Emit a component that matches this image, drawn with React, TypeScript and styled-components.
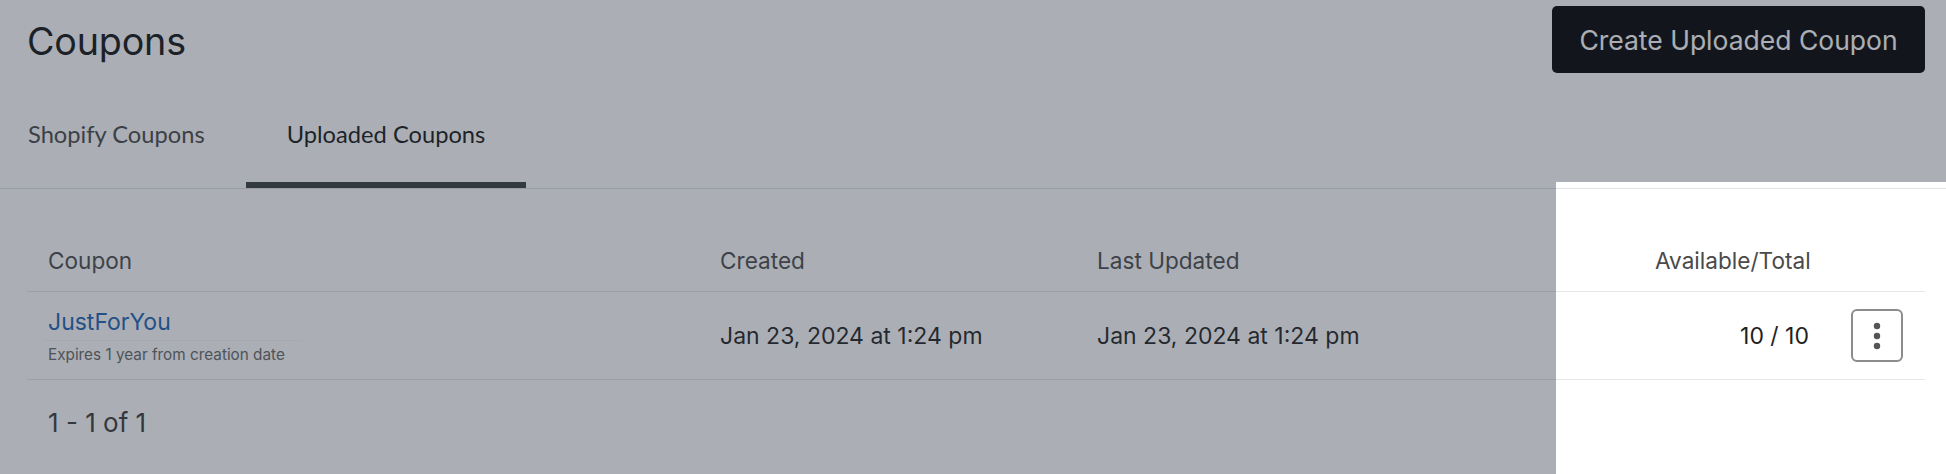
import React from "react";
import styled, { createGlobalStyle } from "styled-components";

const GlobalStyle = createGlobalStyle`
  html, body {
    margin: 0;
    padding: 0;
    background: #ffffff;
    overflow: hidden;
  }
  body {
    font-family: Inter, "Liberation Sans", Arial, sans-serif;
    color: #222;
  }
`;

const Page = styled.div`
  position: relative;
  width: 1946px;
  height: 474px;
  overflow: hidden;
  background: #ffffff;
`;

const Header = styled.div`
  display: flex;
  align-items: center;
  justify-content: space-between;
  padding: 6px 21px 0 27px;
`;

const Title = styled.h1`
  margin: 0;
  padding-top: 2px;
  font-size: 37.7px;
  font-weight: 400;
  color: #111315;
  letter-spacing: -0.2px;
`;

const PrimaryButton = styled.button`
  height: 67px;
  width: 373px;
  border: none;
  border-radius: 5px;
  background: #000000;
  color: #ffffff;
  font-family: Inter, "Liberation Sans", Arial, sans-serif;
  font-size: 26.5px;
  font-weight: 400;
  cursor: pointer;
`;

const TabBar = styled.div`
  display: flex;
  padding-left: 28px;
  border-bottom: 1px solid #dfe3e8;
`;

const Tab = styled.div<{ $active?: boolean; $first?: boolean }>`
  padding: 46px 41px 33px ${(p) => (p.$first ? "0" : "41px")};
  line-height: 30px;
  font-family: Lato, Inter, sans-serif;
  font-size: 23.7px;
  color: ${(p) => (p.$active ? "#141414" : "#474747")};
  border-bottom: 6px solid ${(p) => (p.$active ? "#383c40" : "transparent")};
`;

const Content = styled.div`
  padding: 42px 21px 0 27px;
`;

const Row = styled.div<{ $head?: boolean }>`
  display: grid;
  grid-template-columns: 672px 377px 1fr 196px 95px;
  align-items: center;
  min-height: ${(p) => (p.$head ? "60px" : "87px")};
  border-bottom: 1px solid #e6e6e6;
`;

const Cell = styled.div<{ $right?: boolean }>`
  padding: 0 21px;
  text-align: ${(p) => (p.$right ? "right" : "left")};
`;

const HeadCell = styled(Cell)`
  font-size: 22.6px;
  line-height: 30px;
  color: #4a4a4a;
`;

const CouponInfo = styled.div`
  padding-top: 2px;
`;

const CouponLink = styled.a`
  display: block;
  width: 254px;
  margin-left: -4px;
  padding: 0 0 4px 4px;
  font-size: 23px;
  line-height: 28px;
  color: #1b62b3;
  text-decoration: none;
  border-bottom: 1px solid rgba(0, 0, 0, 0.03);
`;

const Expiry = styled.div`
  margin-top: 4px;
  font-size: 15.3px;
  line-height: 20px;
  color: #666666;
`;

const BodyText = styled.div`
  font-size: 23px;
  line-height: 30px;
  color: #1f1f1f;
`;

const KebabButton = styled.button`
  display: flex;
  align-items: center;
  justify-content: center;
  width: 52px;
  height: 53px;
  padding: 0;
  background: #ffffff;
  border: 2px solid #8c8c8c;
  border-radius: 6px;
  cursor: pointer;
`;

const Footer = styled.div`
  padding: 28px 21px 0;
  font-size: 26px;
  line-height: 30px;
  color: #3a3a3a;
`;

// dimmed backdrop with a cut-out around the highlighted column
const Spotlight = styled.div`
  position: absolute;
  top: 182px;
  left: 1556px;
  right: 0;
  bottom: 0;
  pointer-events: none;
  box-shadow: 0 0 0 3000px rgba(45, 55, 70, 0.4);
`;

const KebabIcon = () => (
  <svg width="8" height="28" viewBox="0 0 8 28">
    <circle cx="4" cy="4" r="3.2" fill="#555" />
    <circle cx="4" cy="14" r="3.2" fill="#555" />
    <circle cx="4" cy="24" r="3.2" fill="#555" />
  </svg>
);

export default function App() {
  return (
    <>
      <GlobalStyle />
      <Page>
        <Header>
          <Title>Coupons</Title>
          <PrimaryButton>Create Uploaded Coupon</PrimaryButton>
        </Header>
        <TabBar>
          <Tab $first>Shopify Coupons</Tab>
          <Tab $active>Uploaded Coupons</Tab>
        </TabBar>
        <Content>
          <Row $head>
            <HeadCell>Coupon</HeadCell>
            <HeadCell>Created</HeadCell>
            <HeadCell>Last Updated</HeadCell>
            <HeadCell $right>Available/Total</HeadCell>
            <HeadCell />
          </Row>
          <Row>
            <Cell>
              <CouponInfo>
                <CouponLink href="#">JustForYou</CouponLink>
                <Expiry>Expires 1 year from creation date</Expiry>
              </CouponInfo>
            </Cell>
            <Cell>
              <BodyText>Jan 23, 2024 at 1:24 pm</BodyText>
            </Cell>
            <Cell>
              <BodyText>Jan 23, 2024 at 1:24 pm</BodyText>
            </Cell>
            <Cell $right>
              <BodyText>10 / 10</BodyText>
            </Cell>
            <Cell>
              <KebabButton aria-label="More actions">
                <KebabIcon />
              </KebabButton>
            </Cell>
          </Row>
          <Footer>1 - 1 of 1</Footer>
        </Content>
        <Spotlight />
      </Page>
    </>
  );
}
